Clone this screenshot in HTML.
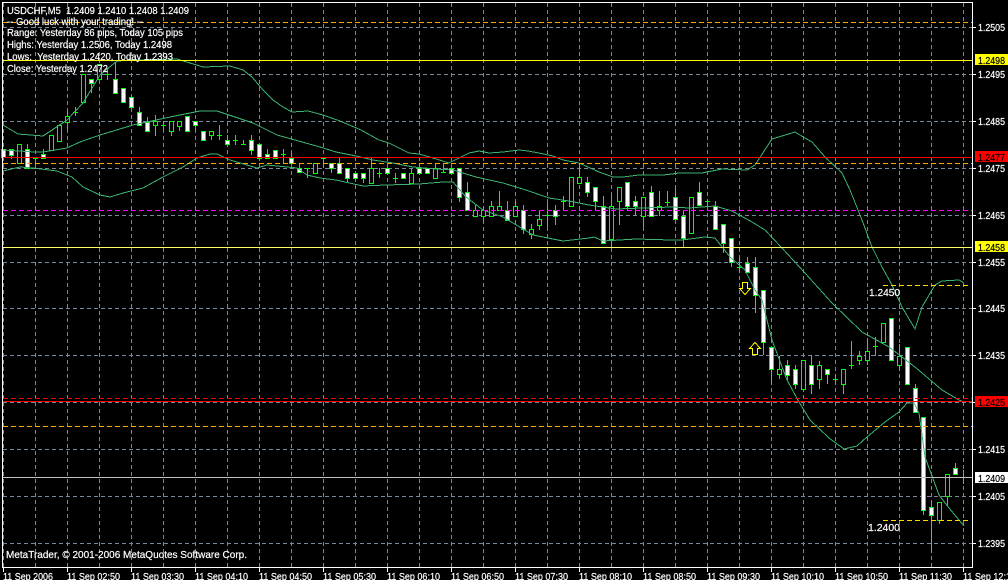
<!DOCTYPE html>
<html lang="en">
<head>
<meta charset="utf-8">
<title>USDCHF,M5</title>
<style>
html,body{margin:0;padding:0;background:#000;width:1008px;height:580px;overflow:hidden}
svg{position:absolute;left:0;top:0;display:block}
text{font-family:"Liberation Sans",sans-serif;font-size:10.5px;fill:#fff;stroke:#fff;stroke-width:.2px}
.k{fill:#000;stroke:#000}
.c{shape-rendering:crispEdges;fill:none}
</style>
</head>
<body>
<svg width="1008" height="580" viewBox="0 0 1008 580" xmlns="http://www.w3.org/2000/svg">
<rect width="1008" height="580" fill="#000"/>

<!-- grid -->
<path class="c" stroke="#778899" stroke-dasharray="4 3" d="M3.5 3V567M35.5 3V567M67.5 3V567M99.5 3V567M131.5 3V567M163.5 3V567M195.5 3V567M227.5 3V567M259.5 3V567M291.5 3V567M323.5 3V567M355.5 3V567M387.5 3V567M419.5 3V567M451.5 3V567M483.5 3V567M515.5 3V567M547.5 3V567M579.5 3V567M611.5 3V567M643.5 3V567M675.5 3V567M707.5 3V567M739.5 3V567M771.5 3V567M803.5 3V567M835.5 3V567M867.5 3V567M899.5 3V567M931.5 3V567M963.5 3V567"/>
<path class="c" stroke="#778899" stroke-dasharray="4 3" d="M3 27.5H972M3 74.5H972M3 121.5H972M3 168.5H972M3 215.5H972M3 262.5H972M3 308.5H972M3 355.5H972M3 402.5H972M3 449.5H972M3 496.5H972M3 543.5H972"/>

<!-- wicks -->
<path class="c" stroke="#00ff00" d="M11.5 149V159M27.5 144V168M35.5 158V163M33 158.5h5M43.5 149V158M67.5 110V131M75.5 107V116M73 112.5h5M91.5 79V93M107.5 68V80M105 74.5h5M115.5 62V79M139.5 107V125M147.5 117V131M155.5 115V136M163.5 121V131M161 125.5h5M171.5 121V136M179.5 121V131M195.5 121V131M211.5 131V140M219.5 125V140M217 135.5h5M227.5 135V144M235.5 135V145M233 140.5h5M243.5 140V144M241 144.5h5M251.5 135V155M259.5 144V160M267.5 149V158M283.5 149V163M281 154.5h5M291.5 153V163M299.5 163V172M307.5 168V178M305 168.5h5M323.5 158V168M321 158.5h5M331.5 163V173M339.5 158V173M347.5 168V183M363.5 173V183M371.5 158V183M379.5 168V178M377 173.5h5M395.5 173V183M393 178.5h5M411.5 168V183M419.5 163V173M435.5 163V178M443.5 163V172M441 172.5h5M459.5 168V202M467.5 182V210M475.5 205V216M483.5 206V221M491.5 201V216M499.5 191V210M507.5 201V220M515.5 201V216M523.5 205V234M531.5 224V239M539.5 210V230M547.5 203V227M545 215.5h5M555.5 205V225M563.5 196V210M561 201.5h5M579.5 163V183M587.5 177V197M595.5 187V211M603.5 196V243M611.5 194V248M619.5 187V225M627.5 182V210M635.5 196V216M643.5 197V227M651.5 186V216M659.5 191V216M667.5 191V206M665 202.5h5M675.5 188V219M683.5 210V247M699.5 182V205M707.5 200V206M705 201.5h5M715.5 201V229M723.5 224V253M731.5 238V267M739.5 257V273M737 267.5h5M747.5 257V272M755.5 257V313M763.5 290V355M771.5 347V385M779.5 356V379M787.5 360V380M795.5 365V389M811.5 355V394M819.5 361V389M827.5 369V384M835.5 374V384M833 379.5h5M843.5 369V394M851.5 341V369M849 365.5h5M859.5 351V365M867.5 338V365M875.5 337V356M873 346.5h5M899.5 344V371M915.5 384V412M923.5 417V515M931.5 502V553M939.5 502V524M947.5 474V506M955.5 463V474M963.5 470V484M961 477.5h5"/>

<!-- bullish (hollow) bodies -->
<path style="shape-rendering:crispEdges" fill="#000" stroke="#00ff00" d="M17.5 144.5h4v19h-4zM49.5 135.5h4v15h-4zM57.5 125.5h4v16h-4zM65.5 116.5h4v6h-4zM81.5 74.5h4v28h-4zM97.5 64.5h4v15h-4zM153.5 121.5h4v4h-4zM169.5 121.5h4v10h-4zM177.5 121.5h4v5h-4zM209.5 131.5h4v4h-4zM313.5 163.5h4v10h-4zM369.5 168.5h4v15h-4zM409.5 173.5h4v10h-4zM433.5 168.5h4v10h-4zM473.5 210.5h4v6h-4zM481.5 210.5h4v6h-4zM489.5 206.5h4v10h-4zM497.5 206.5h4v4h-4zM513.5 206.5h4v10h-4zM529.5 229.5h4v5h-4zM537.5 219.5h4v6h-4zM569.5 177.5h4v29h-4zM577.5 177.5h4v6h-4zM609.5 206.5h4v33h-4zM617.5 187.5h4v14h-4zM641.5 197.5h4v19h-4zM657.5 206.5h4v4h-4zM689.5 197.5h4v36h-4zM777.5 369.5h4v5h-4zM801.5 360.5h4v29h-4zM817.5 365.5h4v14h-4zM841.5 369.5h4v15h-4zM857.5 356.5h4v4h-4zM865.5 351.5h4v9h-4zM881.5 323.5h4v19h-4zM897.5 356.5h4v9h-4zM937.5 502.5h4v18h-4zM945.5 474.5h4v22h-4z"/>

<!-- bearish (white) bodies -->
<path style="shape-rendering:crispEdges" fill="#fff" stroke="#00ff00" d="M1.5 149.5h4v8h-4zM9.5 149.5h4v6h-4zM25.5 149.5h4v19h-4zM41.5 154.5h4v4h-4zM89.5 79.5h4v4h-4zM113.5 79.5h4v14h-4zM121.5 88.5h4v14h-4zM129.5 97.5h4v10h-4zM137.5 112.5h4v13h-4zM145.5 122.5h4v9h-4zM185.5 116.5h4v15h-4zM193.5 121.5h4v4h-4zM201.5 131.5h4v9h-4zM225.5 140.5h4v4h-4zM249.5 140.5h4v10h-4zM257.5 144.5h4v14h-4zM265.5 154.5h4v4h-4zM273.5 150.5h4v8h-4zM289.5 158.5h4v5h-4zM297.5 168.5h4v4h-4zM329.5 163.5h4v5h-4zM337.5 163.5h4v10h-4zM345.5 168.5h4v10h-4zM353.5 173.5h4v5h-4zM361.5 173.5h4v5h-4zM385.5 168.5h4v5h-4zM401.5 173.5h4v5h-4zM417.5 168.5h4v5h-4zM425.5 168.5h4v5h-4zM449.5 168.5h4v5h-4zM457.5 168.5h4v29h-4zM465.5 192.5h4v18h-4zM505.5 210.5h4v10h-4zM521.5 210.5h4v19h-4zM553.5 210.5h4v6h-4zM585.5 182.5h4v10h-4zM593.5 187.5h4v14h-4zM601.5 206.5h4v37h-4zM625.5 182.5h4v24h-4zM633.5 201.5h4v5h-4zM649.5 192.5h4v24h-4zM673.5 197.5h4v22h-4zM681.5 216.5h4v22h-4zM697.5 192.5h4v13h-4zM713.5 206.5h4v23h-4zM721.5 224.5h4v19h-4zM729.5 238.5h4v24h-4zM745.5 263.5h4v9h-4zM753.5 267.5h4v28h-4zM761.5 290.5h4v52h-4zM769.5 347.5h4v22h-4zM785.5 365.5h4v10h-4zM793.5 369.5h4v15h-4zM809.5 365.5h4v19h-4zM825.5 369.5h4v5h-4zM889.5 318.5h4v42h-4zM905.5 347.5h4v37h-4zM913.5 388.5h4v24h-4zM921.5 417.5h4v93h-4zM929.5 507.5h4v8h-4zM953.5 468.5h4v6h-4z"/>

<!-- bollinger bands -->
<g class="c" stroke="#3cb371">
<path d="M3 125L18 134L43 136L55 128L67 120L83 103L100 75L117 61L133 60L177 59L190 63L203 67L230 66L243 70L252 77L263 90L273 100L283 107L292 112L308 111L323 115L340 121L361 130L379 140L389 143L409 153L419 154L433 158L449 163L461 157L469 153L479 151L489 153L503 152L519 150L528 151L539 153L553 156L563 160L579 163L599 172L613 177L623 177L639 175L663 175L672 174L679 173L702 173L722 169L747 170L755 165L772 139L782 136L795 132L805 138L812 142L825 157L842 173L850 190L862 220L872 247L882 267L892 285L902 307L915 329L922 307L935 285L942 281L959 280L964 283"/>
<path d="M3 150L35 152L43 152L67 148L80 142L100 135L133 125L170 117L200 111L217 111L253 123L277 135L320 147L336 152L356 156L373 160L393 163L413 167L436 169L453 170L476 177L503 183L526 190L549 198L569 201L589 205L616 209L643 208L672 207L689 208L715 206L732 211L752 222L765 230L782 248L805 273L832 303L862 332L889 347L915 367L942 390L959 400L964 402"/>
<path d="M3 171L20 167L33 168L57 171L72 177L83 187L100 195L110 197L123 193L143 188L163 177L183 167L197 158L210 154L217 154L230 160L257 168L267 165L287 167L297 168L307 175L320 178L336 180L363 186L386 185L419 184L443 182L453 182L466 197L483 210L503 217L533 235L563 241L589 238L594 237L603 241L636 239L672 240L682 240L705 237L715 238L730 257L745 270L755 290L762 300L772 340L787 380L799 402L810 420L829 438L844 449L857 446L867 437L885 422L899 412L907 403L914 403L919 413L925 457L939 495L949 508L964 526"/>
</g>

<!-- horizontal levels -->
<g class="c">
<path stroke="#ffa500" stroke-dasharray="5 3" d="M3 22.5H972M3 163.5H972M3 426.5H972"/>
<path stroke="#ff00ff" stroke-dasharray="5 3" d="M3 210.5H972"/>
<path stroke="#ff0000" stroke-dasharray="5 3" d="M3 398.5H972"/>
<path stroke="#ffff00" d="M3 60.5H972"/>
<path stroke="#ff0000" d="M3 157.5H972M3 401.5H972"/>
<path stroke="#ffff66" d="M3 247.5H972"/>
<path stroke="#c0c0c0" d="M3 477.5H972"/>
<path stroke="#ffd700" stroke-dasharray="5 3" d="M883 285.5H970M883 520.5H970"/>
</g>

<!-- arrows -->
<path class="c" stroke="#ffff00" d="M742.5 282.5h5v6h3l-5.5 6l-5.5-6h3z"/>
<path class="c" stroke="#ffff00" d="M752.5 354.5h5v-6h3l-5.5-6l-5.5 6h3z"/>

<!-- frame and ticks -->
<path class="c" stroke="#ffffff" d="M2.5 2.5H972.5V567.5H2.5ZM973 27.5h3M973 74.5h3M973 121.5h3M973 168.5h3M973 215.5h3M973 262.5h3M973 308.5h3M973 355.5h3M973 402.5h3M973 449.5h3M973 496.5h3M973 543.5h3M3.5 568v4M67.5 568v4M131.5 568v4M195.5 568v4M259.5 568v4M323.5 568v4M387.5 568v4M451.5 568v4M515.5 568v4M579.5 568v4M643.5 568v4M707.5 568v4M771.5 568v4M835.5 568v4M899.5 568v4M963.5 568v4"/>

<!-- header text -->
<text x="7" y="14" textLength="182" lengthAdjust="spacingAndGlyphs">USDCHF,M5&#160;&#160;1.2409 1.2410 1.2408 1.2409</text>
<text x="7" y="25" textLength="136" lengthAdjust="spacingAndGlyphs">-- Good luck with your trading! --</text>
<text x="7" y="36" textLength="176" lengthAdjust="spacingAndGlyphs">Range: Yesterday 86 pips, Today 105 pips</text>
<text x="7" y="48" textLength="165" lengthAdjust="spacingAndGlyphs">Highs: Yesterday 1.2506, Today 1.2498</text>
<text x="7" y="60" textLength="166" lengthAdjust="spacingAndGlyphs">Lows:&#160;&#160;Yesterday 1.2420, Today 1.2393</text>
<text x="7" y="72" textLength="101" lengthAdjust="spacingAndGlyphs">Close: Yesterday 1.2472</text>
<text x="6" y="558" textLength="241" lengthAdjust="spacingAndGlyphs">MetaTrader, © 2001-2006 MetaQuotes Software Corp.</text>

<!-- chart labels -->
<text x="869" y="296" textLength="31" lengthAdjust="spacingAndGlyphs">1.2450</text>
<text x="868" y="531" textLength="32" lengthAdjust="spacingAndGlyphs">1.2400</text>

<!-- price axis -->
<g>
<text x="978" y="31" textLength="27" lengthAdjust="spacingAndGlyphs">1.2505</text>
<text x="978" y="78" textLength="27" lengthAdjust="spacingAndGlyphs">1.2495</text>
<text x="978" y="125" textLength="27" lengthAdjust="spacingAndGlyphs">1.2485</text>
<text x="978" y="172" textLength="27" lengthAdjust="spacingAndGlyphs">1.2475</text>
<text x="978" y="219" textLength="27" lengthAdjust="spacingAndGlyphs">1.2465</text>
<text x="978" y="266" textLength="27" lengthAdjust="spacingAndGlyphs">1.2455</text>
<text x="978" y="312" textLength="27" lengthAdjust="spacingAndGlyphs">1.2445</text>
<text x="978" y="359" textLength="27" lengthAdjust="spacingAndGlyphs">1.2435</text>
<text x="978" y="453" textLength="27" lengthAdjust="spacingAndGlyphs">1.2415</text>
<text x="978" y="500" textLength="27" lengthAdjust="spacingAndGlyphs">1.2405</text>
<text x="978" y="547" textLength="27" lengthAdjust="spacingAndGlyphs">1.2395</text>
</g>
<rect x="975" y="54" width="33" height="11" fill="#ffff00"/>
<text class="k" x="978" y="64" textLength="27" lengthAdjust="spacingAndGlyphs">1.2498</text>
<rect x="975" y="151" width="33" height="11" fill="#ff0000"/>
<text class="k" x="978" y="161" textLength="27" lengthAdjust="spacingAndGlyphs">1.2477</text>
<rect x="975" y="241" width="33" height="11" fill="#ffff00"/>
<text class="k" x="978" y="251" textLength="27" lengthAdjust="spacingAndGlyphs">1.2458</text>
<rect x="975" y="396" width="33" height="11" fill="#ff0000"/>
<text class="k" x="978" y="406" textLength="27" lengthAdjust="spacingAndGlyphs">1.2425</text>
<rect x="975" y="472" width="33" height="11" fill="#ffffff"/>
<text class="k" x="978" y="482" textLength="27" lengthAdjust="spacingAndGlyphs">1.2409</text>

<!-- time axis -->
<g>
<text x="3" y="580" textLength="50" lengthAdjust="spacingAndGlyphs">11 Sep 2006</text>
<text x="67" y="580" textLength="53" lengthAdjust="spacingAndGlyphs">11 Sep 02:50</text>
<text x="131" y="580" textLength="53" lengthAdjust="spacingAndGlyphs">11 Sep 03:30</text>
<text x="195" y="580" textLength="53" lengthAdjust="spacingAndGlyphs">11 Sep 04:10</text>
<text x="259" y="580" textLength="53" lengthAdjust="spacingAndGlyphs">11 Sep 04:50</text>
<text x="323" y="580" textLength="53" lengthAdjust="spacingAndGlyphs">11 Sep 05:30</text>
<text x="387" y="580" textLength="53" lengthAdjust="spacingAndGlyphs">11 Sep 06:10</text>
<text x="451" y="580" textLength="53" lengthAdjust="spacingAndGlyphs">11 Sep 06:50</text>
<text x="515" y="580" textLength="53" lengthAdjust="spacingAndGlyphs">11 Sep 07:30</text>
<text x="579" y="580" textLength="53" lengthAdjust="spacingAndGlyphs">11 Sep 08:10</text>
<text x="643" y="580" textLength="53" lengthAdjust="spacingAndGlyphs">11 Sep 08:50</text>
<text x="707" y="580" textLength="53" lengthAdjust="spacingAndGlyphs">11 Sep 09:30</text>
<text x="771" y="580" textLength="53" lengthAdjust="spacingAndGlyphs">11 Sep 10:10</text>
<text x="835" y="580" textLength="53" lengthAdjust="spacingAndGlyphs">11 Sep 10:50</text>
<text x="899" y="580" textLength="53" lengthAdjust="spacingAndGlyphs">11 Sep 11:30</text>
<text x="963" y="580" textLength="53" lengthAdjust="spacingAndGlyphs">11 Sep 12:10</text>
</g>
</svg>
</body>
</html>
